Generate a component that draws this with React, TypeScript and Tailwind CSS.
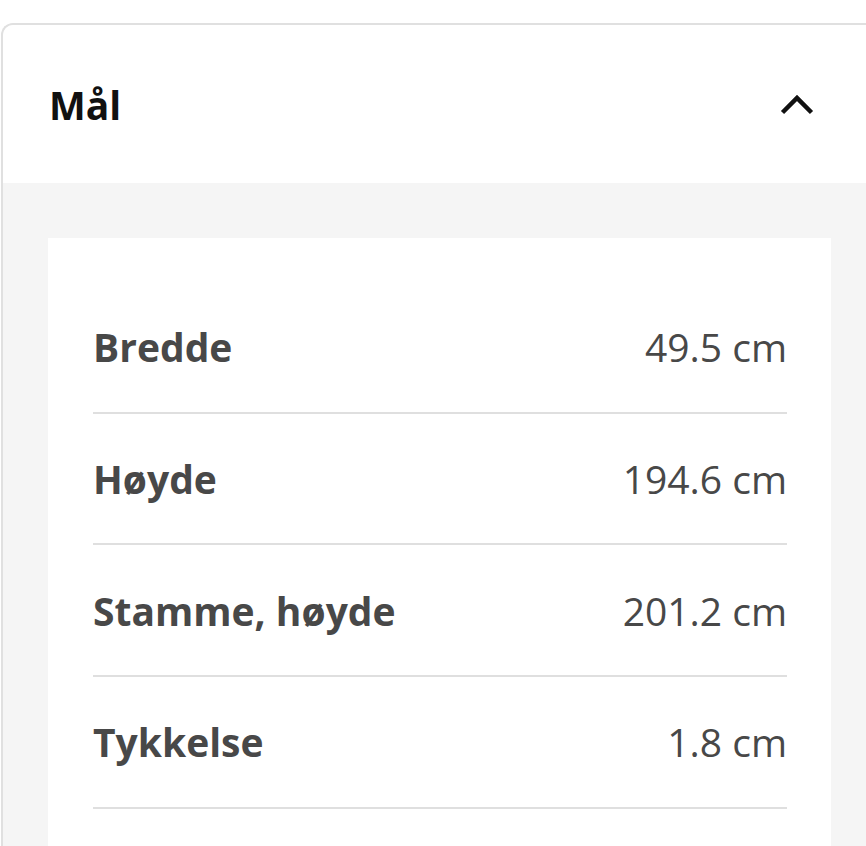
const rows = [
  { label: "Bredde", value: "49.5 cm" },
  { label: "Høyde", value: "194.6 cm" },
  { label: "Stamme, høyde", value: "201.2 cm" },
  { label: "Tykkelse", value: "1.8 cm" },
];

export default function App() {
  return (
    <div
      className="w-[866px] h-[846px] overflow-hidden bg-white pt-[23px] pl-[1px]"
      style={{ fontFamily: '"Open Sans", "Noto Sans", sans-serif' }}
    >
      <div className="w-[876px] h-[900px] rounded-tl-[12px] border-l-2 border-t-2 border-[#e0e0e0] overflow-hidden bg-[#f5f5f5]">
        {/* Header */}
        <div className="h-[158px] bg-white flex items-center justify-between pl-[46px] pr-[67px]">
          <h2 className="text-[39px] font-bold text-[#111111] leading-none">Mål</h2>
          <svg width="34" height="22" viewBox="0 0 34 22" fill="none" className="mr-[-4px]">
            <path d="M2.5 19.5 L17 5 L31.5 19.5" stroke="#111111" strokeWidth="4.5" />
          </svg>
        </div>

        {/* Body */}
        <div className="pt-[55px] pl-[45px]">
          <div className="w-[783px] h-[800px] bg-white pt-[44px] pl-[45px] pr-[44px]">
            {rows.map((row) => (
              <div
                key={row.label}
                className="h-[131.67px] flex items-center justify-between border-b-2 border-[#dfdfdf] text-[#484848] text-[39px] leading-none"
              >
                <span className="font-bold">{row.label}</span>
                <span>{row.value}</span>
              </div>
            ))}
          </div>
        </div>
      </div>
    </div>
  );
}
